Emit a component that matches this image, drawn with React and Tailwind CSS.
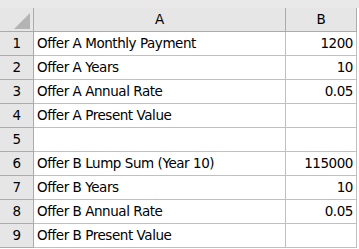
import React from 'react';

const rows = [
  ['Offer A Monthly Payment', '1200'],
  ['Offer A Years', '10'],
  ['Offer A Annual Rate', '0.05'],
  ['Offer A Present Value', ''],
  ['', ''],
  ['Offer B Lump Sum (Year 10)', '115000'],
  ['Offer B Years', '10'],
  ['Offer B Annual Rate', '0.05'],
  ['Offer B Present Value', ''],
];

export default function App() {
  return (
    <div className="w-[359px] h-[249px] bg-white overflow-hidden text-black" style={{ fontFamily: '"DejaVu Sans", Verdana, sans-serif' }}>
      <div className="h-[8px] bg-[#e9e9e9]" />
      <div className="grid grid-cols-[34px_252px_71px] text-[13.5px] tracking-[-0.45px]">
        {/* header row */}
        <div className="h-[24px] bg-[#e6e6e6] border-r border-b border-[#ababab] relative">
          <svg className="absolute left-[14px] top-[5px]" width="16" height="16" viewBox="0 0 16 16">
            <polygon points="16,0 16,16 0,16" fill="#b4b4b4" />
          </svg>
        </div>
        <div className="h-[24px] bg-[#e6e6e6] border-r border-b border-[#ababab] flex items-center justify-center">A</div>
        <div className="h-[24px] bg-[#e6e6e6] border-r border-b border-[#ababab] flex items-center justify-center">B</div>

        {rows.map((r, i) => (
          <React.Fragment key={i}>
            <div className="h-[24px] bg-[#e6e6e6] border-r border-b border-[#ababab] flex items-center justify-center">{i + 1}</div>
            <div className="h-[24px] border-r border-b border-[#c0c0c0] flex items-center pl-[3px] whitespace-nowrap">{r[0]}</div>
            <div className="h-[24px] border-r border-b border-[#c0c0c0] flex items-center justify-end pr-[3px]">{r[1]}</div>
          </React.Fragment>
        ))}
      </div>
    </div>
  );
}
